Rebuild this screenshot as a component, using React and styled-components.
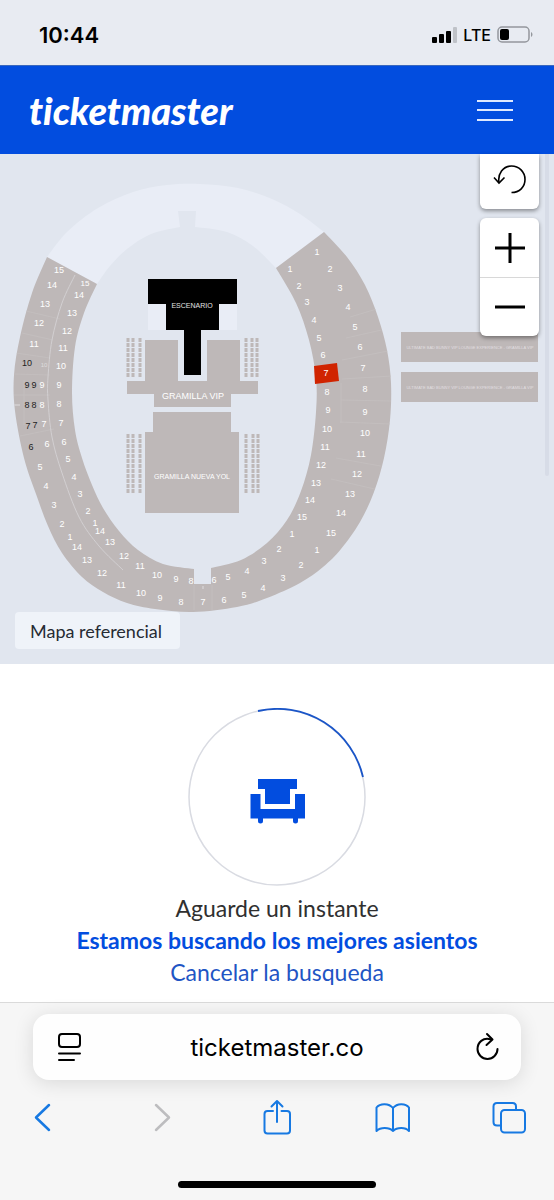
import React from "react";
import styled, { createGlobalStyle, css } from "styled-components";

const GlobalStyle = createGlobalStyle`
  * {
    box-sizing: border-box;
  }
  body {
    margin: 0;
    background-color: white;
    font-family: "Lato", sans-serif;
  }
  button {
    border: none;
    padding: 0;
    background: none;
    font: inherit;
    color: inherit;
    cursor: pointer;
  }
  svg {
    display: block;
  }
`;

const Page = styled.div`
  min-height: 100vh;
  display: flex;
  flex-direction: column;
`;

const StatusBar = styled.div`
  height: 65px;
  padding: 4px 21px 0 39px;
  display: flex;
  align-items: center;
  justify-content: space-between;
  background-color: #e8ebf2;
  color: black;
  font-family: "Inter", sans-serif;
`;

const Clock = styled.span`
  font-size: 22px;
  font-weight: 600;
`;

const StatusIcons = styled.div`
  display: flex;
  align-items: center;
  gap: 6px;
  font-size: 16px;
  font-weight: 500;
`;

const Header = styled.header`
  height: 89px;
  padding: 0 41px 0 29px;
  display: flex;
  align-items: center;
  justify-content: space-between;
  background-color: #024ddf;
  border-top: 1px solid #3a68bd;
`;

const Logo = styled.a`
  color: white;
  font-size: 38px;
  line-height: 44px;
  font-weight: 900;
  font-style: italic;
  font-variant-ligatures: none;
  text-decoration: none;
`;

const MenuButton = styled.button`
  width: 36px;
  height: 21px;
  display: flex;
  flex-direction: column;
  justify-content: space-between;
`;

const MenuLine = styled.span`
  width: 100%;
  height: 2px;
  background-color: #dfe9ff;
`;

const MapSection = styled.section`
  position: relative;
  background-color: #e1e6ef;
`;

const MapSvg = styled.svg`
  width: 100%;
  height: auto;
  font-family: "Liberation Sans", Arial, sans-serif;
`;

const MapText = styled.text`
  text-anchor: middle;
  dominant-baseline: central;
  fill: ${(props) => props.$color || "white"};
  font-size: ${(props) => props.$size || 9}px;
`;

const MapControls = styled.div`
  position: absolute;
  top: 0;
  right: 15px;
  width: 59px;
  display: flex;
  flex-direction: column;
  gap: 9px;
`;

const ControlGroup = styled.div`
  display: flex;
  flex-direction: column;
  background-color: white;
  border-radius: ${(props) => (props.$attached ? "0 0 6px 6px" : "6px")};
  box-shadow: 0 2px 4px rgba(0, 0, 0, 0.4);
`;

const ControlButton = styled.button`
  height: ${(props) => (props.$short ? 55 : 59)}px;
  padding-bottom: ${(props) => (props.$short ? 5 : 0)}px;
  display: flex;
  align-items: center;
  justify-content: center;
  & + & {
    border-top: 1px solid #d8d8d8;
  }
`;

const ScrollTrack = styled.div`
  position: absolute;
  top: 0;
  right: 5px;
  width: 4px;
  height: 322px;
  border-radius: 0 0 2px 2px;
  background-color: #d7dce7;
`;

const MapLabel = styled.div`
  position: absolute;
  left: 15px;
  bottom: 15px;
  height: 37px;
  padding: 0 18px 0 15px;
  display: flex;
  align-items: center;
  border-radius: 4px;
  background-color: #eff3f9;
  color: #262b33;
  font-size: 18px;
`;

const Waiting = styled.main`
  flex: 1;
  padding: 44px 0 13px;
  display: flex;
  flex-direction: column;
  align-items: center;
  background-color: white;
`;

const Spinner = styled.svg`
  width: 178px;
  height: 178px;
  margin-bottom: 6px;
`;

const waitingLine = css`
  margin: 0;
  font-size: 23px;
  line-height: 32px;
`;

const WaitText = styled.p`
  ${waitingLine}
  color: #303030;
`;

const SearchText = styled.p`
  ${waitingLine}
  color: #024ddf;
  font-weight: 700;
`;

const CancelButton = styled.button`
  && {
    ${waitingLine}
    color: #1f55c4;
  }
`;

const BrowserBar = styled.footer`
  height: 198px;
  padding: 11px 0 12px;
  display: flex;
  flex-direction: column;
  align-items: center;
  background-color: #f6f6f6;
  border-top: 1px solid #dadada;
`;

const AddressBar = styled.div`
  width: calc(100% - 66px);
  height: 66px;
  padding: 0 20px 0 24px;
  display: flex;
  align-items: center;
  justify-content: space-between;
  border-radius: 16px;
  background-color: #fefefe;
  box-shadow: 0 3px 20px rgba(0, 0, 0, 0.12);
`;

const AddressInput = styled.input`
  flex: 1;
  min-width: 0;
  border: none;
  outline: none;
  background: none;
  text-align: center;
  color: black;
  font-family: "Inter", sans-serif;
  font-size: 24px;
`;

const Toolbar = styled.nav`
  width: 100%;
  padding: 19px 27px 0 24px;
  display: flex;
  justify-content: space-between;
`;

const ToolButton = styled.button`
  width: 36px;
  height: 36px;
  && {
    color: ${(props) => (props.disabled ? "#bdbdbf" : "#1779e2")};
  }
`;

const HomeIndicator = styled.div`
  width: 198px;
  height: 7px;
  margin-top: auto;
  border-radius: 4px;
  background-color: black;
`;

const SEAT = "#beb8b8";
const EMPTY = "#e9edf6";

// smooth curve through the points, starting at the current position
const curve = (points) => {
  let d = "";
  for (let i = 0; i < points.length - 1; i++) {
    const p0 = points[i - 1] || points[i];
    const p1 = points[i];
    const p2 = points[i + 1];
    const p3 = points[i + 2] || p2;
    d += `C${p1[0] + (p2[0] - p0[0]) / 6} ${p1[1] + (p2[1] - p0[1]) / 6} `;
    d += `${p2[0] - (p3[0] - p1[0]) / 6} ${p2[1] - (p3[1] - p1[1]) / 6} `;
    d += `${p2[0]} ${p2[1]}`;
  }
  return d;
};

const outerRing = [
  [47, 257], [32, 293], [20, 337], [14, 375], [15, 411], [24, 458], [36, 494],
  [48, 526], [62, 553], [82, 577], [103, 592], [127, 603], [155, 609], [193, 612],
  [237, 607], [267, 598], [300, 583], [323, 567], [341, 549], [360, 522],
  [374, 492], [384, 458], [390, 420], [391, 383], [387, 350], [378, 317],
  [365, 285], [347, 257], [324, 232],
];

const innerRight = [
  [276, 268], [296, 303], [309, 340], [316, 378], [316, 412], [311, 455],
  [301, 491], [287, 520], [267, 543], [241, 560], [211, 568],
];

const innerLeft = [
  [194, 569], [163, 564], [138, 550], [119, 531], [103, 508], [92, 485],
  [82, 458], [75, 430], [72, 392], [75, 347], [84, 313], [97, 284],
];

const topOuter = [
  [47, 257], [67, 232], [98, 208], [133, 192], [167, 185], [200, 184],
  [238, 188], [272, 199], [300, 214], [324, 232],
];

const topInnerRight = [[276, 268], [253, 246], [227, 232], [195, 227]];
const topInnerLeft = [[180, 227], [151, 234], [127, 249], [110, 266], [97, 284]];

const divider = [
  [75, 275], [62, 303], [52, 340], [48, 377], [48, 400], [52, 437], [62, 473],
  [79, 517], [99, 546], [123, 570],
];

const ringPath = `M47 257${curve(outerRing)}L276 268${curve(innerRight)}V584H194V569${curve(innerLeft)}Z`;
const emptyPath = `M47 257${curve(topOuter)}L276 268${curve(topInnerRight)}L196 211H178L180 227${curve(topInnerLeft)}Z`;

const sections = [
  // outer ring
  [15, 59, 270], [14, 52, 285], [13, 45, 304], [12, 39, 323], [11, 34, 344],
  [9, 42, 385], [8, 42, 405], [7, 44, 424], [6, 47, 444], [5, 40, 467],
  [4, 46, 486], [3, 54, 505], [2, 62, 524], [1, 70, 537], [14, 77, 547],
  [13, 87, 560], [12, 102, 573], [11, 121, 585], [10, 141, 593], [9, 160, 598],
  [8, 181, 602], [7, 203, 602], [6, 224, 600], [5, 244, 595], [4, 263, 588],
  [3, 283, 578], [2, 301, 565], [1, 317, 550], [15, 331, 533], [14, 341, 513],
  [13, 350, 494], [12, 357, 474], [11, 361, 454], [10, 365, 433], [9, 365, 412],
  [8, 365, 389], [7, 363, 368], [6, 360, 347], [5, 355, 327], [4, 348, 307],
  [3, 340, 288], [2, 330, 269], [1, 317, 252],
  // inner ring
  [14, 79, 295], [13, 72, 313], [12, 67, 331], [11, 63, 348],
  [10, 61, 366], [9, 59, 385], [8, 59, 404], [7, 61, 423], [6, 64, 442],
  [5, 68, 459], [4, 74, 477], [3, 80, 494], [2, 88, 511], [1, 95, 523],
  [14, 100, 531], [13, 110, 542], [12, 124, 556], [11, 140, 566], [10, 157, 575],
  [9, 176, 579], [8, 191, 581], [6, 214, 580], [5, 228, 577], [4, 247, 571],
  [3, 264, 561], [2, 279, 549], [1, 292, 534], [15, 302, 517], [14, 310, 500],
  [13, 316, 483], [12, 321, 465], [11, 325, 447], [10, 327, 429], [9, 328, 410],
  [8, 327, 392], [7, 326, 373], [6, 323, 355], [5, 319, 338], [4, 314, 320],
  [3, 307, 302], [2, 299, 286], [1, 290, 269],
];

const darkSections = [
  [10, 27, 363], [9, 27, 385], [9, 34, 385], [8, 27, 405], [8, 34, 405],
  [7, 28, 426], [7, 35, 425], [6, 31, 447],
];

// lines between neighbouring sections
const seams = [
  "M26 311l34 8M22 333l31 7M16 353l34 5M14 374l36 1M14 395l36 0M20 436l34-7",
  "M350 317l30-9M346 338l40-9M342 360l46-9M342 379l50-3M341 400l50 1M340 422l50 2M336 458l50 9M331 479l48 11",
  "M341 383v40M194 585v25M212 585v25M24 380v45",
];

const rowBlocks = [
  [128, 338, 378], [133, 338, 378], [140, 338, 378],
  [246, 338, 378], [252, 338, 378], [257, 338, 378],
  [128, 434, 494], [133, 434, 494], [140, 434, 494],
  [246, 434, 494], [253, 434, 494], [258, 434, 494],
];

const LOUNGE = "ULTIMATE BAD BUNNY VIP LOUNGE EXPERIENCE - GRAMILLA VIP";

const StadiumMap = () => {
  return (
    <MapSvg viewBox="0 154 554 510" role="img" aria-label="Mapa del estadio">
      <clipPath id="ring">
        <path d={ringPath} />
      </clipPath>
      <path fill={EMPTY} d={emptyPath} />
      <path fill={SEAT} d={ringPath} />
      <g clipPath="url(#ring)" fill="none">
        {seams.map((d) => (
          <path key={d} d={d} stroke="#c3bebe" />
        ))}
        <path d={`M75 275${curve(divider)}`} stroke="#d2cfd1" />
        <path d="M14 405h6M203 586v3" stroke="#dedcde" />
      </g>
      <path d="M314 366L337 363L339 381L315 384Z" fill="#d02400" />

      <path d="M148 304h18v26h-18zM219 304h18v26h-18z" fill={EMPTY} />
      <path d="M148 279h89v25h-18v26h-18v45h-17v-45h-18v-26h-18z" fill="black" />
      <path
        d="M145 340h33v41h29v-41h33v41h18v13h-27v13h-77v-13h-27v-13h18z"
        fill={SEAT}
      />
      <path d="M153 412h78v20h8v81h-94v-81h8z" fill={SEAT} />
      {rowBlocks.map(([x, y1, y2]) => (
        <path
          key={`${x}-${y1}`}
          d={`M${x} ${y1}V${y2}`}
          stroke={SEAT}
          strokeWidth="3"
          strokeDasharray="4 1"
        />
      ))}
      <MapText x="192" y="305" $size={7} $color="#e2e2e2">
        ESCENARIO
      </MapText>
      <MapText x="193" y="396">
        GRAMILLA VIP
      </MapText>
      <MapText x="192" y="476" $size={7}>
        GRAMILLA NUEVA YOL
      </MapText>

      {[332, 372].map((y) => (
        <g key={y}>
          <rect x="401" y={y} width="137" height="30" fill={SEAT} />
          <MapText x="470" y={y + 15} $size={4} $color="#e2dfe1">
            {LOUNGE}
          </MapText>
        </g>
      ))}

      {sections.map(([label, x, y]) => (
        <MapText key={`${x}-${y}`} x={x} y={y}>
          {label}
        </MapText>
      ))}
      <MapText x="85" y="283" $size={8}>
        15
      </MapText>
      <MapText x="44" y="365" $size={6} $color="#dedcde">
        10
      </MapText>
      {darkSections.map(([label, x, y]) => (
        <MapText key={`${x}-${y}`} x={x} y={y} $color="#222">
          {label}
        </MapText>
      ))}
    </MapSvg>
  );
};

const SignalIcon = () => (
  <svg width="25" height="16" viewBox="0 0 25 16">
    <rect x="0" y="10" width="5" height="6" rx="1" />
    <rect x="7" y="7" width="5" height="9" rx="1" />
    <rect x="14" y="4" width="5" height="12" rx="1" />
    <rect x="21" y="0" width="4" height="16" rx="1" fill="#bfc2c8" />
  </svg>
);

const BatteryIcon = () => (
  <svg width="36" height="17" viewBox="0 0 36 17">
    <rect x="1" y="1" width="31" height="15" rx="4" fill="none" stroke="#94979d" strokeWidth="1.5" />
    <rect x="3" y="3" width="9" height="11" rx="2" />
    <path d="M34 6c2 1 2 4 0 5z" fill="#94979d" />
  </svg>
);

export default function App() {
  return (
    <>
      <GlobalStyle />
      <Page>
        <StatusBar>
          <Clock>10:44</Clock>
          <StatusIcons>
            <SignalIcon />
            <span>LTE</span>
            <BatteryIcon />
          </StatusIcons>
        </StatusBar>

        <Header>
          <Logo href="#">ticketmaster</Logo>
          <MenuButton aria-label="Menú">
            <MenuLine />
            <MenuLine />
            <MenuLine />
          </MenuButton>
        </Header>

        <MapSection>
          <StadiumMap />
          <ScrollTrack />
          <MapControls>
            <ControlGroup $attached>
              <ControlButton $short aria-label="Restablecer">
                <svg width="34" height="30" viewBox="0 0 34 30" fill="none" stroke="black" strokeWidth="1.6">
                  <path d="M6 18.5C4.5 10 10 2 18.5 2C26 2 32 8 32 15.5C32 23 26.5 28.5 18.5 28.5" />
                  <path d="M1 13.5L6 19L11.5 13.5" />
                </svg>
              </ControlButton>
            </ControlGroup>
            <ControlGroup>
              <ControlButton aria-label="Acercar">
                <svg width="30" height="30" viewBox="0 0 30 30" stroke="black" strokeWidth="3">
                  <path d="M0 15H30M15 0V30" />
                </svg>
              </ControlButton>
              <ControlButton aria-label="Alejar">
                <svg width="30" height="30" viewBox="0 0 30 30" stroke="black" strokeWidth="3">
                  <path d="M0 15H30" />
                </svg>
              </ControlButton>
            </ControlGroup>
          </MapControls>
          <MapLabel>Mapa referencial</MapLabel>
        </MapSection>

        <Waiting>
          <Spinner viewBox="188 708 178 178">
            <circle cx="277" cy="797" r="88" fill="none" stroke="#d9dbe2" strokeWidth="1.5" />
            <path d="M258 711A88 88 0 0 1 363 777" fill="none" stroke="#1a55c8" strokeWidth="1.8" />
            <g fill="#024ddf">
              <path d="M258 779h39v10h-7v15h-25v-15h-7z" />
              <path d="M250.5 794h10v15h34.5v-15h10v24.500h-7v2.500a2.500 2.500 0 0 1-5 0v-2.500h-30v2.500a2.500 2.500 0 0 1-5 0v-2.500h-7.500z" />
            </g>
          </Spinner>
          <WaitText>Aguarde un instante</WaitText>
          <SearchText>Estamos buscando los mejores asientos</SearchText>
          <CancelButton>Cancelar la busqueda</CancelButton>
        </Waiting>

        <BrowserBar>
          <AddressBar>
            <button aria-label="Opciones de página">
              <svg width="26" height="30" viewBox="0 0 26 30" fill="none" stroke="black" strokeWidth="2" strokeLinecap="round">
                <rect x="2" y="2" width="21" height="13" rx="3" />
                <path d="M2 21.5H23M2 28H17" />
              </svg>
            </button>
            <AddressInput aria-label="Dirección" defaultValue="ticketmaster.co" />
            <button aria-label="Recargar">
              <svg width="30" height="30" viewBox="-4 0 30 30" fill="none" stroke="black" strokeWidth="2" strokeLinecap="round" strokeLinejoin="round">
                <path d="M16 7.5C8 5 2.5 10.5 2.5 17A10 10 0 0 0 22.5 17" />
                <path d="M12 2L17.5 7.5L11.5 13" />
              </svg>
            </button>
          </AddressBar>
          <Toolbar>
            <ToolButton aria-label="Atrás">
              <svg width="36" height="36" viewBox="0 0 36 36" fill="none" stroke="currentColor" strokeWidth="2.5" strokeLinecap="round" strokeLinejoin="round">
                <path d="M25 6L12 18.5L25 31" />
              </svg>
            </ToolButton>
            <ToolButton aria-label="Adelante" disabled>
              <svg width="36" height="36" viewBox="0 0 36 36" fill="none" stroke="currentColor" strokeWidth="2.5" strokeLinecap="round" strokeLinejoin="round">
                <path d="M15 6L28 18.5L15 31" />
              </svg>
            </ToolButton>
            <ToolButton aria-label="Compartir">
              <svg width="36" height="36" viewBox="0 0 36 36" fill="none" stroke="currentColor" strokeWidth="2" strokeLinecap="round" strokeLinejoin="round">
                <path d="M15 12H9.5Q6.5 12 6.5 15V31.5Q6.5 34.5 9.5 34.5H29Q32 34.5 32 31.5V15Q32 12 29 12H23.5" />
                <path d="M19 23V2M13.5 7.5L19 2L24.5 7.5" />
              </svg>
            </ToolButton>
            <ToolButton aria-label="Marcadores">
              <svg width="36" height="36" viewBox="0 0 36 36" fill="none" stroke="currentColor" strokeWidth="2" strokeLinecap="round" strokeLinejoin="round">
                <path d="M19 9C15 4 6 4 2.5 8.5V32C6.5 28 15 28 19 32C23 28 31.5 28 35 32V8.5C31.5 4 23 4 19 9V32" />
              </svg>
            </ToolButton>
            <ToolButton aria-label="Pestañas">
              <svg width="36" height="36" viewBox="0 0 36 36" fill="none" stroke="currentColor" strokeWidth="2" strokeLinejoin="round">
                <path d="M10 26.5H6Q2.5 26.5 2.5 23V7.5Q2.5 4 6 4H21.5Q25 4 25 7.5V11" />
                <rect x="10" y="11" width="24" height="22.5" rx="3.5" />
              </svg>
            </ToolButton>
          </Toolbar>
          <HomeIndicator />
        </BrowserBar>
      </Page>
    </>
  );
}
